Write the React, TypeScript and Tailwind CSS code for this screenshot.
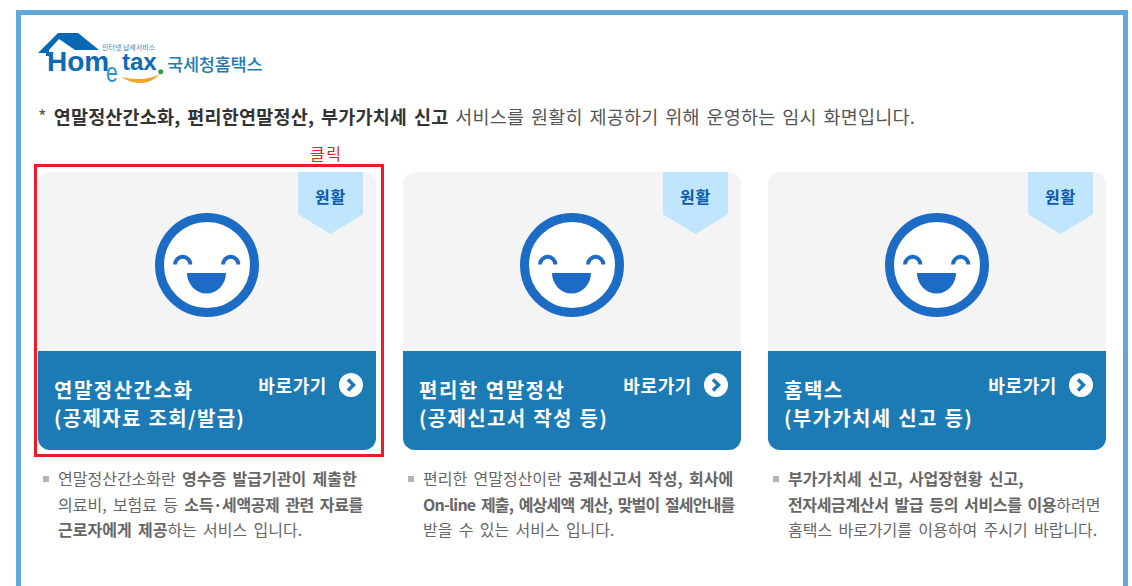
const FONT = '"Noto Sans CJK KR", "Noto Sans", sans-serif';

function Smile() {
  return (
    <svg width="106" height="106" viewBox="0 0 106 106" className="block">
      <circle cx="53" cy="53" r="47.500" fill="#fff" stroke="#1c6cc6" strokeWidth="9" />
      <path d="M21 52.500a7.700 7.700 0 0 1 15.400 0" fill="none" stroke="#1c6cc6" strokeWidth="4" />
      <path d="M69 52.500a7.700 7.700 0 0 1 15.400 0" fill="none" stroke="#1c6cc6" strokeWidth="4" />
      <path d="M33 61h39a19.500 20.500 0 0 1-39 0z" fill="#1c6cc6" />
    </svg>
  );
}

function Card({ line1, line2 }: { line1: string; line2: string }) {
  return (
    <div className="w-[338px] h-[278px] rounded-[12px] overflow-hidden flex flex-col">
      <div className="relative h-[179px] bg-[#f4f4f4] flex items-center justify-center">
        <div className="pt-[6px]">
          <Smile />
        </div>
        <div className="absolute top-0 right-[13px] w-[65px] h-[62px] bg-[#bfe5ff] [clip-path:polygon(0_0,100%_0,100%_68%,50%_100%,0_68%)] flex justify-center pt-[13px]">
          <span className="text-[16px] leading-[22px] font-bold tracking-[0.8px] text-[#0b5ab0]">원활</span>
        </div>
      </div>
      <div className="flex-1 bg-[#1c7ab5] pl-4 pr-[13px] text-white font-bold flex justify-between">
        <div className="pt-[25px] text-[20px] leading-[28px] tracking-[1.500px] [word-spacing:1px] whitespace-nowrap">
          <div>{line1}</div>
          <div className="tracking-[1.300px]">{line2}</div>
        </div>
        <div className="pt-[21px] flex items-start gap-3">
          <span className="text-[18px] leading-[26px] tracking-[0.6px]">바로가기</span>
          <span className="w-6 h-6 mt-[1px] rounded-full bg-white flex items-center justify-center">
            <svg width="12" height="14" viewBox="0 0 12 14">
              <path d="M3 1.500l5.500 5.500-5.500 5.500" fill="none" stroke="#1c7ab5" strokeWidth="3.500" />
            </svg>
          </span>
        </div>
      </div>
    </div>
  );
}

function Note({ children }: { children: React.ReactNode }) {
  return (
    <div className="flex w-[338px] gap-[9px] pl-[5px] pt-[16px] text-[16px] leading-[25.500px] text-[#666] [word-spacing:2.700px] whitespace-nowrap">
      <span className="mt-[10px] w-[6px] h-[6px] shrink-0 bg-[#b4b4b4]" />
      <div>{children}</div>
    </div>
  );
}

function Logo() {
  return (
    <div className="relative w-[240px] h-[56px]">
      <svg width="240" height="56" viewBox="0 0 240 56" className="absolute inset-0">
        <path d="M0 20L20 0h20l21 17H37L21 6 11 17v6H8v-3z" fill="#0868b4" />
        <path d="M84 44c10 8 28 9 38-3-10 6-26 6-38 3z" fill="#f0a72e" />
        <circle cx="122.700" cy="38.700" r="2.500" fill="#26a548" />
      </svg>
      <span className="absolute left-[64px] top-[9px] text-[7px] leading-[10px] text-[#3b7fc0] whitespace-nowrap">인터넷 납세서비스</span>
      <span className="absolute left-[9px] top-[13px] text-[28px] leading-[32px] font-bold text-[#0d6ab5] [font-family:'Liberation_Sans',sans-serif]">Hom</span>
      <span className="absolute left-[66px] top-[26px] scale-x-75 text-[28px] leading-[28px] text-[#2a8fd0] [font-family:'Liberation_Sans',sans-serif]">e</span>
      <span className="absolute left-[84px] top-[13px] text-[24px] leading-[32px] font-bold text-[#0d6ab5] [font-family:'Liberation_Sans',sans-serif]">tax</span>
      <span className="absolute left-[129px] top-[19px] text-[17.500px] leading-[24px] font-medium tracking-[-0.2px] text-[#1f7ab8] whitespace-nowrap">국세청홈택스</span>
    </div>
  );
}

export default function App() {
  return (
    <div className="w-[1132px] h-[586px] overflow-hidden bg-white" style={{ fontFamily: FONT }}>
      <div className="ml-4 mt-[10px] w-[1112px] h-[600px] border-[5px] border-[#62a9db] pl-[17px] pt-[18px]">
        <Logo />
        <p className="mt-[13px] text-[18.500px] leading-[28px] tracking-[0.2px] text-[#555] [word-spacing:2.500px] whitespace-nowrap">
          * <b className="text-[#333]">연말정산간소화, 편리한연말정산, 부가가치세 신고</b> 서비스를 원활히 제공하기 위해 운영하는 임시 화면입니다.
        </p>
        <div className="mt-[11px] h-[31px] pl-[272px] text-[16px] leading-[24px] tracking-[1.500px] text-[#ee1c25]">클릭</div>
        <div className="relative flex gap-[27px]">
          <div className="absolute left-[-4px] top-[-8px] w-[350px] h-[293px] border-[3px] border-[#ee1c25] pointer-events-none z-10" />
          <div>
            <Card line1="연말정산간소화" line2="(공제자료 조회/발급)" />
            <Note>
              연말정산간소화란 <b>영수증 발급기관이 제출한</b>
              <br />
              의료비, 보험료 등 <b className="tracking-[-0.4px]">소득·세액공제 관련 자료를</b>
              <br />
              <b>근로자에게 제공</b>하는 서비스 입니다.
            </Note>
          </div>
          <div>
            <Card line1="편리한 연말정산" line2="(공제신고서 작성 등)" />
            <Note>
              편리한 연말정산이란 <b>공제신고서 작성, 회사에</b>
              <br />
              <b className="tracking-[-0.8px]">On-line 제출, 예상세액 계산, 맞벌이 절세안내를</b>
              <br />
              받을 수 있는 서비스 입니다.
            </Note>
          </div>
          <div>
            <Card line1="홈택스" line2="(부가가치세 신고 등)" />
            <Note>
              <b>부가가치세 신고, 사업장현황 신고,</b>
              <br />
              <b className="tracking-[-0.35px]">전자세금계산서 발급 등의 서비스를 이용</b>하려면
              <br />
              홈택스 바로가기를 이용하여 주시기 바랍니다.
            </Note>
          </div>
        </div>
      </div>
    </div>
  );
}
